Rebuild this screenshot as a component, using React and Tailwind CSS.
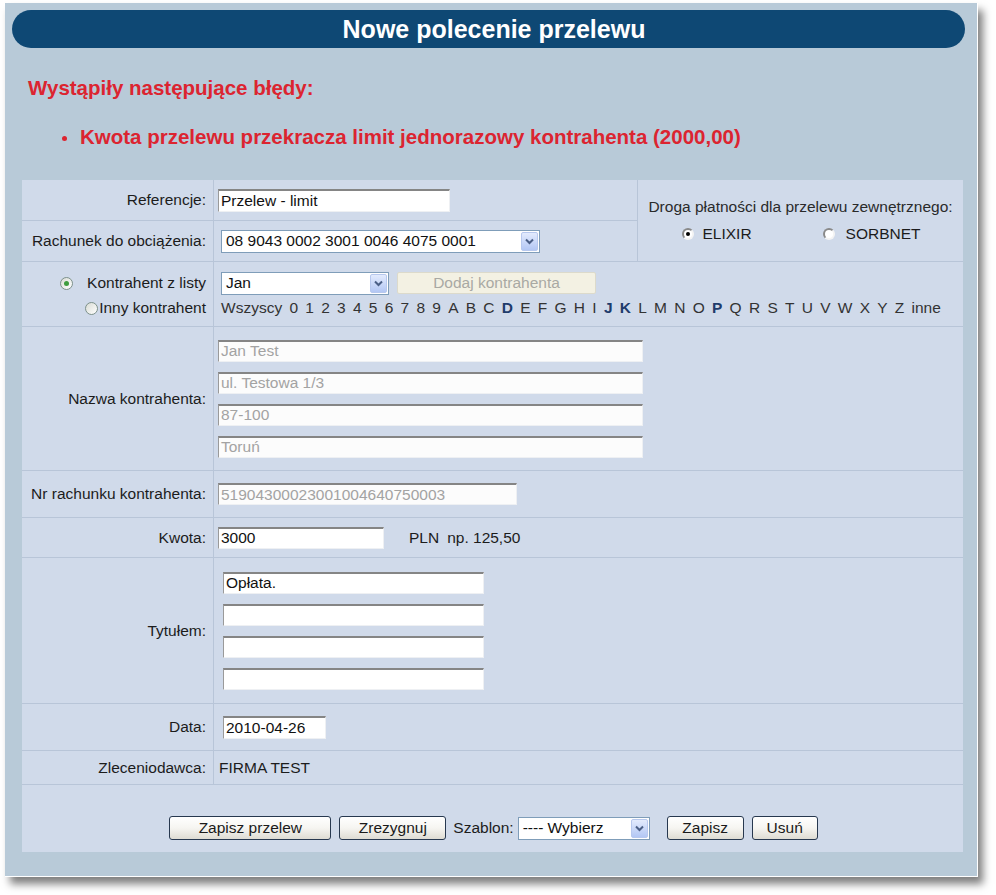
import React from "react";

const FONT = { fontFamily: '"Liberation Sans", Arial, sans-serif' };

function Chevron() {
  return (
    <span className="w-[17px] h-[19px] mr-[1px] shrink-0 rounded-[2px] border border-[#b7c8ee] bg-gradient-to-b from-[#e3ebfd] to-[#b3c7f4] flex items-center justify-center">
      <svg width="9" height="7" viewBox="0 0 9 7">
        <path d="M1 1.5 L4.5 5 L8 1.5" stroke="#4b5f86" strokeWidth="2" fill="none" />
      </svg>
    </span>
  );
}

function Select({ w, value }) {
  return (
    <div className={`flex items-center h-[23px] bg-white border border-[#7f9db9] ${w}`}>
      <span className="flex-1 pl-[4px] whitespace-nowrap overflow-hidden text-[#111]">{value}</span>
      <Chevron />
    </div>
  );
}

function Input({ w, value, disabled, h }) {
  return (
    <div
      className={`flex items-center ${h || "h-[22px]"} ${w} border-t-2 border-l border-r border-b border-t-[#858585] border-l-[#9a9a9a] border-r-[#eef0f3] border-b-[#eef0f3] ${
        disabled ? "bg-[#fcfcfc] text-[#a3a3a3]" : "bg-white text-[#111]"
      } pl-[2px] whitespace-nowrap overflow-hidden`}
    >
      {value}
    </div>
  );
}

function Button({ w, children }) {
  return (
    <div
      className={`h-[24px] ${w} rounded-[3px] border border-[#27384f] bg-gradient-to-b from-white via-[#f6f5f1] to-[#dedcd3] flex items-center justify-center text-[#1a1a1a]`}
    >
      {children}
    </div>
  );
}

function XpRadio({ checked }) {
  return (
    <span className="w-[13px] h-[13px] shrink-0 rounded-full border border-[#7d918a] bg-gradient-to-br from-[#d9dcd5] to-white flex items-center justify-center">
      {checked && <span className="w-[5px] h-[5px] rounded-full bg-[#3e9d3e]" />}
    </span>
  );
}

function ClassicRadio({ checked }) {
  return (
    <span className="w-[12px] h-[12px] shrink-0 rounded-full border-2 border-t-[#8a8a8a] border-l-[#8a8a8a] border-r-[#f4f4f4] border-b-[#f4f4f4] bg-white flex items-center justify-center">
      {checked && <span className="w-[4px] h-[4px] rounded-full bg-black" />}
    </span>
  );
}

const LINE = "border-[#b8c5d8]";

function Row({ label, h, children, contentClass, first, labelClass }) {
  return (
    <div className={`flex ${h} ${first ? "" : `border-t ${LINE}`}`}>
      <div className={`w-[191px] shrink-0 flex pr-[7px] ${labelClass || "items-center justify-end"}`}>{label}</div>
      <div className={`flex-1 border-l ${LINE} ${contentClass || ""}`}>{children}</div>
    </div>
  );
}

const letters = ["0", "1", "2", "3", "4", "5", "6", "7", "8", "9", "A", "B", "C", "D", "E", "F", "G", "H", "I", "J", "K", "L", "M", "N", "O", "P", "Q", "R", "S", "T", "U", "V", "W", "X", "Y", "Z"];
const boldLetters = ["D", "J", "K", "P"];

export default function App() {
  return (
    <div className="w-[996px] h-[895px] bg-white pt-[3px] pl-[5px] text-[15.5px] text-[#1c1c1c]" style={FONT}>
      <div className="w-[973px] h-[874px] bg-[#b8cad8] border-r border-b border-white shadow-[5px_7px_8px_rgba(0,0,0,0.5)] pt-[7px]">
        {/* Header */}
        <div className="ml-[7px] w-[953px] h-[38px] rounded-full bg-[#0e4874] flex items-center justify-center pl-[11px]">
          <span className="text-white font-bold text-[25px] leading-none">Nowe polecenie przelewu</span>
        </div>

        {/* Errors */}
        <div className="ml-[23px] mt-[28px] h-[24px] flex items-center text-[20.5px] font-bold text-[#dc2430]">
          Wystąpiły następujące błędy:
        </div>
        <div className="ml-[57px] mt-[25px] h-[24px] flex items-center text-[20.5px] font-bold text-[#dc2430]">
          <span className="w-[5px] h-[5px] rounded-full bg-[#dc2430] mr-[13px] mt-[2px]" />
          Kwota przelewu przekracza limit jednorazowy kontrahenta (2000,00)
        </div>

        {/* Form */}
        <div className="ml-[17px] mt-[31px] w-[941px] h-[672px] bg-[#d0daea] flex flex-col">
          <div className="flex h-[81px]">
            <div className="w-[615px] flex flex-col">
              <Row first h="h-[40px]" label="Referencje:" contentClass="flex items-center pl-[4px]">
                <Input w="w-[232px]" h="h-[23px]" value="Przelew - limit" />
              </Row>
              <Row h="h-[41px]" label="Rachunek do obciążenia:" contentClass="flex items-center pl-[7px]">
                <Select w="w-[319px]" value="08 9043 0002 3001 0046 4075 0001" />
              </Row>
            </div>
            <div className={`flex-1 border-l ${LINE} flex flex-col items-center justify-center gap-[9px]`}>
              <div className="h-[18px] leading-[18px] text-[#2a2a2a]">Droga płatności dla przelewu zewnętrznego:</div>
              <div className="h-[18px] flex items-center gap-[71px] pl-[2px]">
                <div className="flex items-center gap-[8px]">
                  <ClassicRadio checked />
                  <span>ELIXIR</span>
                </div>
                <div className="flex items-center gap-[11px]">
                  <ClassicRadio />
                  <span>SORBNET</span>
                </div>
              </div>
            </div>
          </div>

          <Row
            h="h-[65px]"
            labelClass="flex-col items-end pt-[10px]"
            label={
              <>
                <div className="h-[22px] flex items-center">
                  <XpRadio checked />
                  <span className="ml-[14px]">Kontrahent z listy</span>
                </div>
                <div className="h-[18px] mt-[5px] flex items-center">
                  <XpRadio />
                  <span className="ml-[1px]">Inny kontrahent</span>
                </div>
              </>
            }
            contentClass="flex flex-col pt-[10px] pl-[7px]"
          >
            <div className="h-[22px] flex items-center gap-[8px]">
              <Select w="w-[168px]" value="Jan" />
              <div className="h-[22px] w-[199px] rounded-[2px] border border-[#dcdacb] bg-[#f3f1e3] flex items-center justify-center text-[#a9a9a3]">
                Dodaj kontrahenta
              </div>
            </div>
            <div className="h-[18px] mt-[5px] flex items-center gap-[7.25px] text-[#333]">
              <span>Wszyscy</span>
              {letters.map((l) =>
                boldLetters.includes(l) ? (
                  <span key={l} className="font-bold text-[#1f3c6c]">
                    {l}
                  </span>
                ) : (
                  <span key={l}>{l}</span>
                )
              )}
              <span>inne</span>
            </div>
          </Row>

          <Row h="h-[144px]" label="Nazwa kontrahenta:" contentClass="flex flex-col justify-center gap-[10px] pl-[4px]">
            <Input w="w-[425px]" value="Jan Test" disabled />
            <Input w="w-[425px]" value="ul. Testowa 1/3" disabled />
            <Input w="w-[425px]" value="87-100" disabled />
            <Input w="w-[425px]" value="Toruń" disabled />
          </Row>

          <Row h="h-[47px]" label="Nr rachunku kontrahenta:" contentClass="flex items-center pl-[4px]">
            <Input w="w-[299px]" value="51904300023001004640750003" disabled />
          </Row>

          <Row h="h-[40px]" label="Kwota:" contentClass="flex items-center pl-[4px]">
            <Input w="w-[166px]" value="3000" />
            <span className="ml-[25px]">PLN</span>
            <span className="ml-[8px]">np. 125,50</span>
          </Row>

          <Row h="h-[146px]" label="Tytułem:" contentClass="flex flex-col justify-center gap-[10px] pl-[9px]">
            <Input w="w-[261px]" value="Opłata." />
            <Input w="w-[261px]" value="" />
            <Input w="w-[261px]" value="" />
            <Input w="w-[261px]" value="" />
          </Row>

          <Row h="h-[47px]" label="Data:" contentClass="flex items-center pl-[9px]">
            <Input w="w-[103px]" h="h-[23px]" value="2010-04-26" />
          </Row>

          <Row h="h-[34px]" label="Zleceniodawca:" contentClass="flex items-center pl-[5px]">
            FIRMA TEST
          </Row>

          <div className={`h-[68px] border-t ${LINE} flex justify-center items-start pt-[31px] pl-[2px]`}>
            <div className="flex items-center">
              <Button w="w-[162px]">Zapisz przelew</Button>
              <div className="ml-[8px]">
                <Button w="w-[107px]">Zrezygnuj</Button>
              </div>
              <span className="ml-[7px]">Szablon:</span>
              <div className="ml-[4px]">
                <Select w="w-[132px]" value="---- Wybierz" />
              </div>
              <div className="ml-[17px]">
                <Button w="w-[77px]">Zapisz</Button>
              </div>
              <div className="ml-[8px]">
                <Button w="w-[66px]">Usuń</Button>
              </div>
            </div>
          </div>
        </div>
      </div>
    </div>
  );
}
